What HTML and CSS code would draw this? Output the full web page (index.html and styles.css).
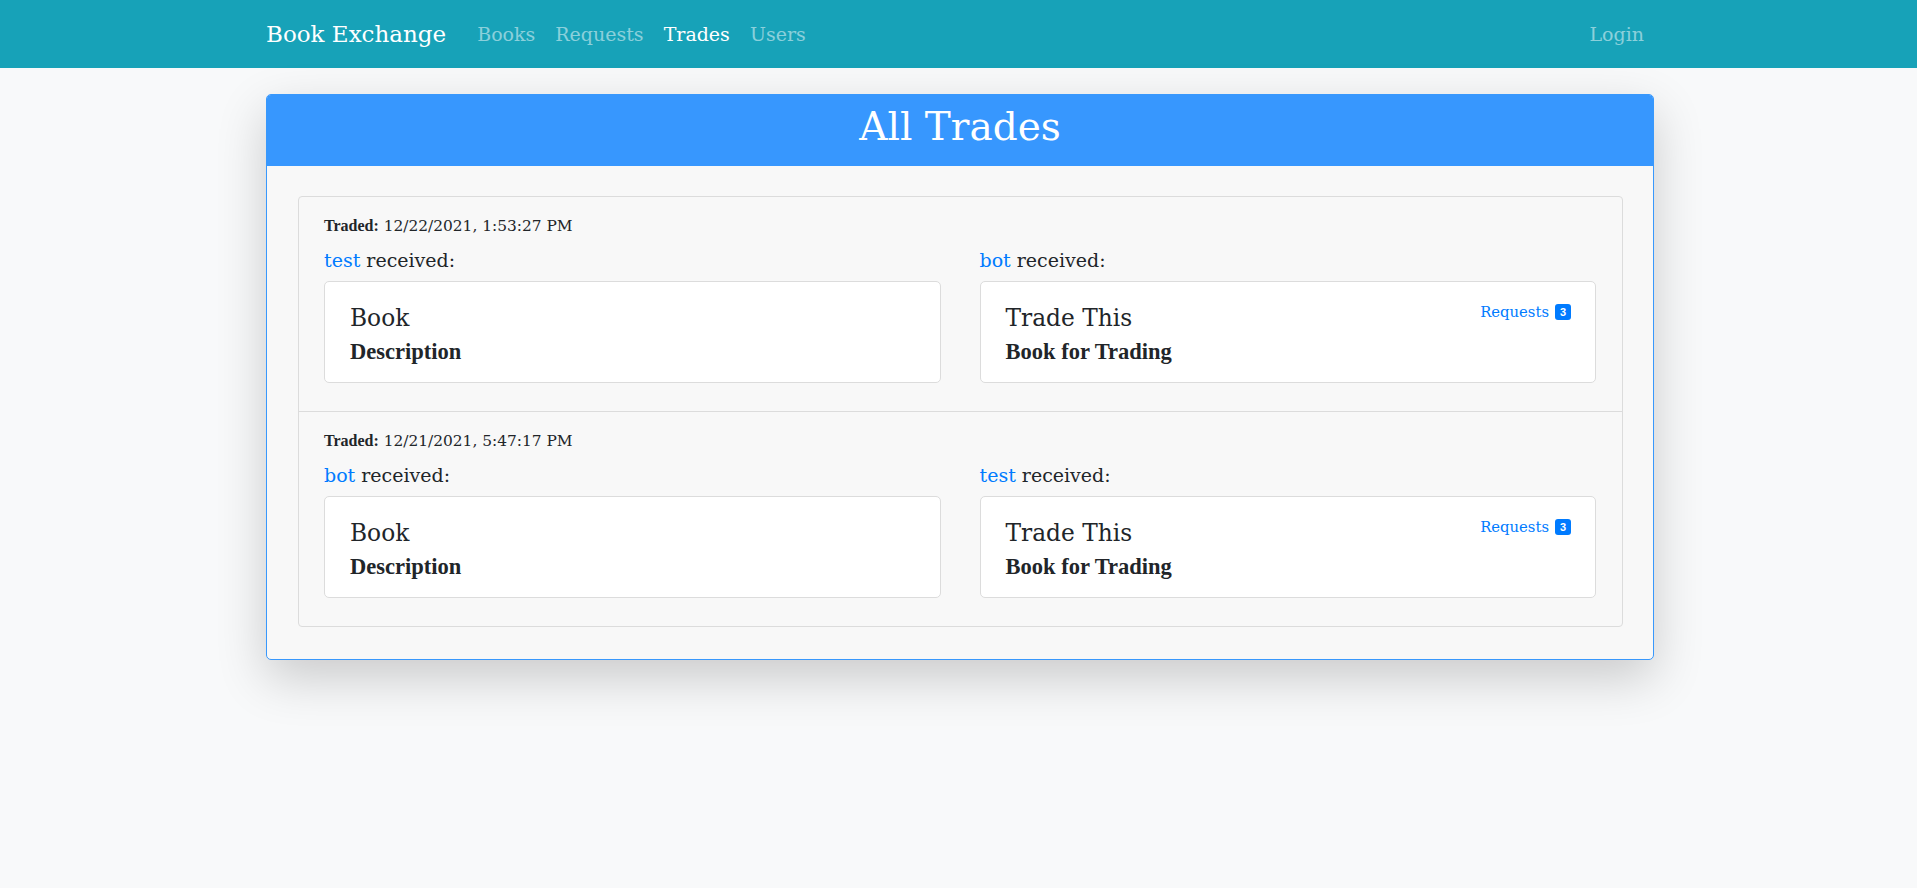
FILE: index.html
```html
<!DOCTYPE html>
<html lang="en">
<head>
<meta charset="utf-8">
<title>Book Exchange</title>
<link rel="stylesheet" href="styles.css">
</head>
<body>
<nav class="navbar">
  <div class="container nav-inner">
    <a class="brand" href="#">Book Exchange</a>
    <ul class="nav-links">
      <li><a class="nav-link" href="#">Books</a></li>
      <li><a class="nav-link" href="#">Requests</a></li>
      <li><a class="nav-link active" href="#">Trades</a></li>
      <li><a class="nav-link" href="#">Users</a></li>
    </ul>
    <a class="nav-link login" href="#">Login</a>
  </div>
</nav>

<main class="container">
  <section class="card">
    <header class="card-header">
      <h1 class="card-heading">All Trades</h1>
    </header>
    <div class="card-body">
      <ul class="trade-list">
        <li class="trade">
          <p class="traded"><strong>Traded:</strong> 12/22/2021, 1:53:27 PM</p>
          <div class="trade-cols">
            <div class="trade-col">
              <p class="received"><a href="#" class="user">test</a> received:</p>
              <div class="book-card">
                <div class="book-top">
                  <h5 class="book-title">Book</h5>
                </div>
                <h6 class="book-desc">Description</h6>
              </div>
            </div>
            <div class="trade-col">
              <p class="received"><a href="#" class="user">bot</a> received:</p>
              <div class="book-card">
                <div class="book-top">
                  <h5 class="book-title">Trade This</h5>
                  <a href="#" class="req-link">Requests <span class="badge">3</span></a>
                </div>
                <h6 class="book-desc">Book for Trading</h6>
              </div>
            </div>
          </div>
        </li>
        <li class="trade">
          <p class="traded"><strong>Traded:</strong> 12/21/2021, 5:47:17 PM</p>
          <div class="trade-cols">
            <div class="trade-col">
              <p class="received"><a href="#" class="user">bot</a> received:</p>
              <div class="book-card">
                <div class="book-top">
                  <h5 class="book-title">Book</h5>
                </div>
                <h6 class="book-desc">Description</h6>
              </div>
            </div>
            <div class="trade-col">
              <p class="received"><a href="#" class="user">test</a> received:</p>
              <div class="book-card">
                <div class="book-top">
                  <h5 class="book-title">Trade This</h5>
                  <a href="#" class="req-link">Requests <span class="badge">3</span></a>
                </div>
                <h6 class="book-desc">Book for Trading</h6>
              </div>
            </div>
          </div>
        </li>
      </ul>
    </div>
  </section>
</main>
</body>
</html>
```

FILE: styles.css
```css
* { box-sizing: border-box; }

html, body {
  margin: 0;
  padding: 0;
}

html { background: #f8f9fa; }

body {
  padding-left: 3px;
  min-height: 888px;
  background: #f8f9fa;
  color: #212529;
  font-family: "DejaVu Serif", "Liberation Serif", serif;
}

a { text-decoration: none; }

.container {
  width: 1388px;
  margin: 0 auto;
}

/* Navbar */
.navbar {
  background: #17a2b8;
  height: 68px;
  margin-left: -3px;
  padding-left: 3px;
}

.nav-inner {
  display: flex;
  align-items: center;
  height: 100%;
}

.brand {
  color: #fff;
  font-size: 23px;
  line-height: 30px;
  margin-right: 21px;
  white-space: nowrap;
}

.nav-links {
  display: flex;
  list-style: none;
  margin: 0;
  padding: 0;
  flex: 1;
}

.nav-link {
  display: block;
  color: rgba(255, 255, 255, 0.5);
  font-size: 19px;
  line-height: 28px;
  padding: 0 10px;
}

.nav-link.active { color: #fff; }

/* Card */
.card {
  margin-top: 26px;
  border: 1px solid #3898fc;
  border-radius: 5px;
  background: #f8f8f8;
  box-shadow: 0 18px 50px rgba(0, 0, 0, 0.19);
}

.card-header {
  background: #3797fe;
  border-radius: 4px 4px 0 0;
  padding: 8px 0 16px;
  text-align: center;
}

.card-heading {
  margin: 0;
  color: #fff;
  font-weight: normal;
  font-size: 39px;
  line-height: 47px;
}

.card-body {
  padding: 30px 30px 32px 31px;
}

.trade-list {
  list-style: none;
  margin: 0;
  padding: 0;
  border: 1px solid #dcdcdc;
  border-radius: 4px;
}

.trade {
  padding: 18px 26px 28px 25px;
}

.trade + .trade {
  border-top: 1px solid #dcdcdc;
}

.traded {
  margin: 0;
  font-size: 15.4px;
  line-height: 22px;
}

.traded strong {
  font-family: "Liberation Serif", serif;
  font-size: 16px;
}

.trade-cols {
  display: grid;
  grid-template-columns: 1fr 1fr;
  column-gap: 39px;
  margin-top: 10px;
}

.received {
  margin: 0 0 8px;
  font-size: 19px;
  line-height: 26px;
}

.user { color: #007bff; }

.book-card {
  background: #fff;
  border: 1px solid #dcdcdc;
  border-radius: 5px;
  padding: 22px 25px 17px;
}

.book-top {
  display: flex;
  justify-content: space-between;
  align-items: flex-start;
}

.book-title {
  margin: 0;
  font-weight: normal;
  font-size: 23.3px;
  line-height: 28px;
}

.book-desc {
  margin: 7px 0 0;
  font-family: "Liberation Serif", serif;
  font-weight: bold;
  font-size: 22.5px;
  line-height: 26px;
}

.req-link {
  display: flex;
  align-items: center;
  color: #007bff;
  font-size: 14.8px;
  line-height: 20px;
  margin-top: -2px;
  margin-right: -1px;
}

.badge {
  display: inline-block;
  margin-left: 6px;
  width: 16px;
  height: 16px;
  border-radius: 3px;
  background: #007bff;
  color: #fff;
  font-family: "Liberation Sans", Arial, sans-serif;
  font-weight: bold;
  font-size: 11px;
  line-height: 16px;
  text-align: center;
}
```
